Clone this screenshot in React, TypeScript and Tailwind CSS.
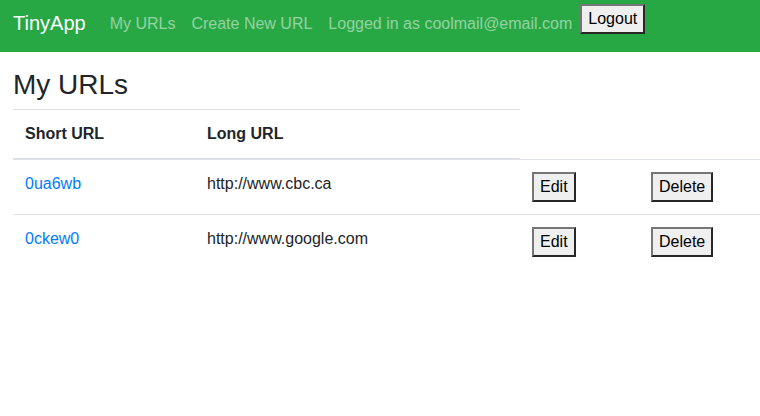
import React from 'react';

interface UrlEntry {
  id: string;
  longURL: string;
}

const urls: UrlEntry[] = [
  { id: '0ua6wb', longURL: 'http://www.cbc.ca' },
  { id: '0ckew0', longURL: 'http://www.google.com' },
];

const btn =
  'bg-[#efefef] text-black text-[16px] leading-[24px] px-[6px] py-[1px] border-2 border-t-[#767676] border-l-[#767676] border-b-[#262626] border-r-[#262626]';

export default function App() {
  return (
    <div className="w-[760px] h-[416px] bg-white text-[#212529] font-['Liberation_Sans',Arial,sans-serif] text-[16px] leading-[24px] overflow-hidden">
      <nav className="h-[52px] bg-[#28a745] flex items-start px-[13px]">
        <a className="mt-[8px] mr-[16px] text-white text-[20px] leading-[30px]">TinyApp</a>
        <a className="mt-[12px] px-2 text-white/50">My URLs</a>
        <a className="mt-[12px] px-2 text-white/50">Create New URL</a>
        <span className="mt-[12px] px-2 text-white/50">Logged in as coolmail@email.com</span>
        <button className={`mt-[4px] ${btn}`}>Logout</button>
      </nav>

      <main className="px-[13px]">
        <h3 className="mt-[16px] mb-[7px] text-[28px] leading-[34px] font-medium">My URLs</h3>
        <table className="w-[747px] table-fixed">
          <colgroup>
            <col className="w-[182px]" />
            <col className="w-[325px]" />
            <col className="w-[119px]" />
            <col className="w-[121px]" />
          </colgroup>
          <thead>
            <tr>
              <th className="text-left font-bold p-3 border-t border-b-2 border-[#dee2e6] align-bottom">Short URL</th>
              <th className="text-left font-bold p-3 border-t border-b-2 border-[#dee2e6] align-bottom">Long URL</th>
            </tr>
          </thead>
          <tbody>
            {urls.map(u => (
              <tr key={u.id}>
                <td className="p-3 border-t border-[#dee2e6] align-top">
                  <a className="text-[#007bff]">{u.id}</a>
                </td>
                <td className="p-3 border-t border-[#dee2e6] align-top">{u.longURL}</td>
                <td className="p-3 border-t border-[#dee2e6] align-top">
                  <button className={btn}>Edit</button>
                </td>
                <td className="p-3 border-t border-[#dee2e6] align-top">
                  <button className={btn}>Delete</button>
                </td>
              </tr>
            ))}
          </tbody>
        </table>
      </main>
    </div>
  );
}
